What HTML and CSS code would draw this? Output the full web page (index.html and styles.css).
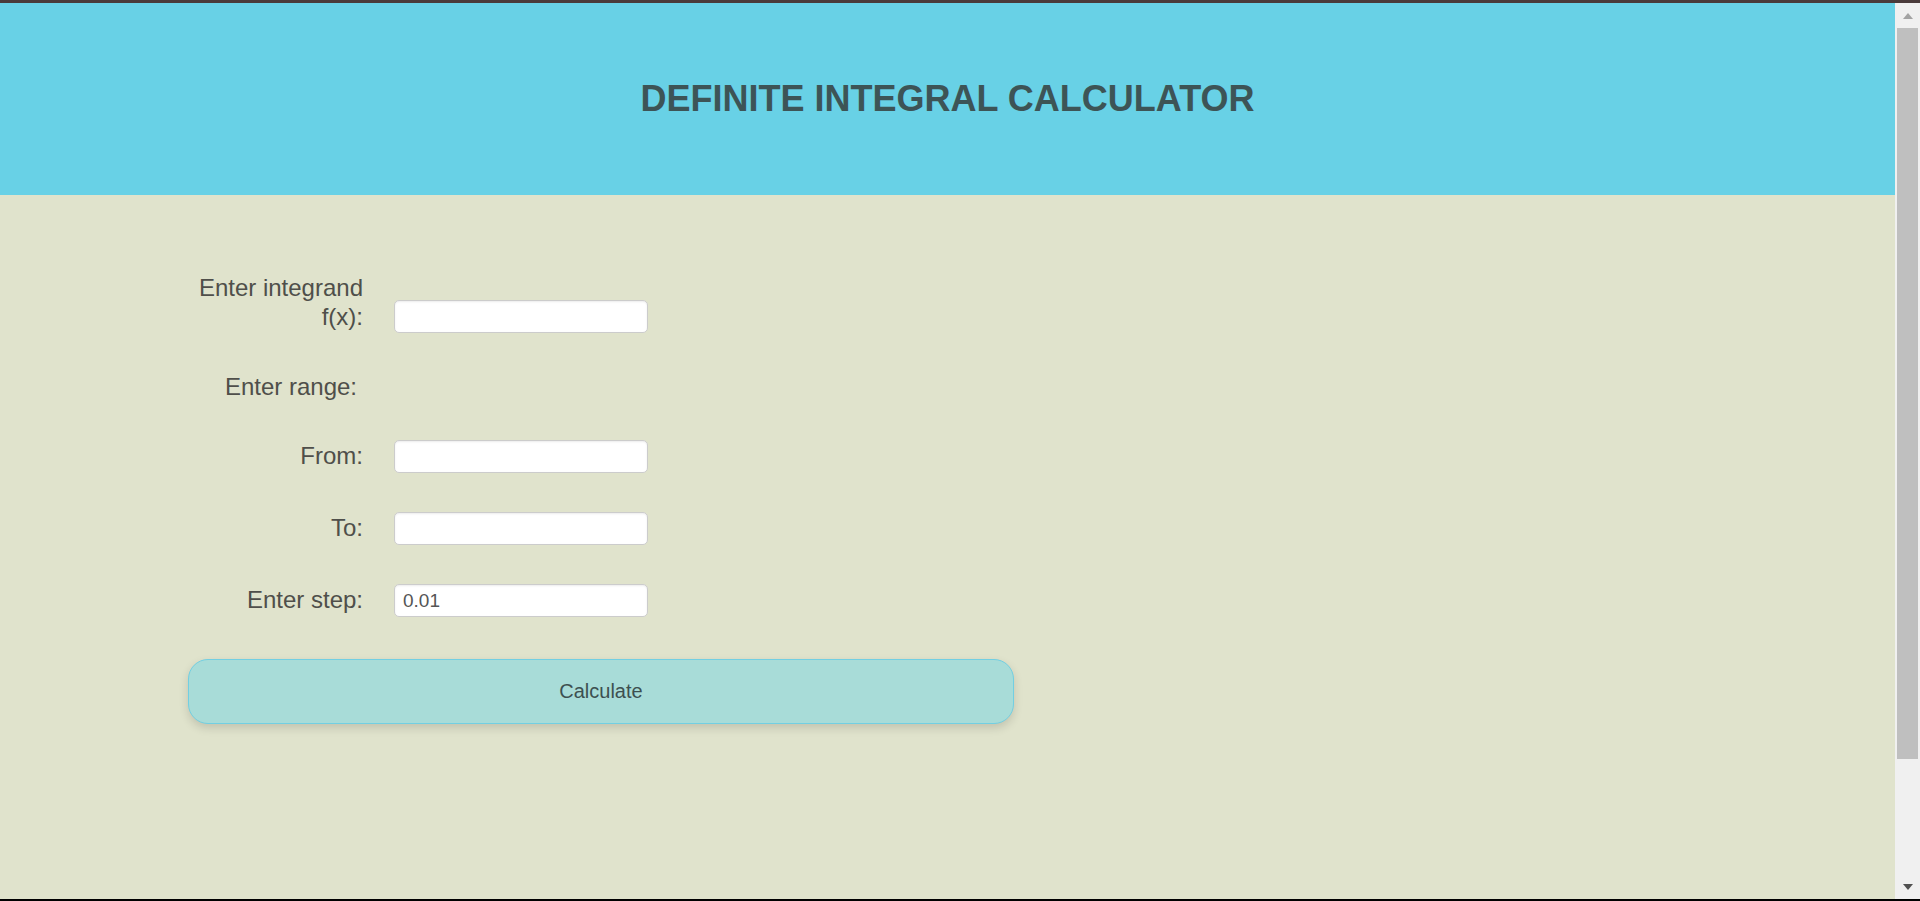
FILE: index.html
```html
<!DOCTYPE html>
<html lang="en">
<head>
<meta charset="utf-8">
<title>Definite Integral Calculator</title>
<link rel="stylesheet" href="styles.css">
</head>
<body>
<div class="frame">
  <div class="page">
    <header class="hero">
      <h1 class="hero-title">DEFINITE INTEGRAL CALCULATOR</h1>
    </header>
    <main class="content">
      <form class="calc">
        <div class="row row-tall">
          <label class="lbl lbl-tall" for="fx">Enter integrand f(x):</label>
          <input class="field" id="fx" type="text">
        </div>
        <div class="row row-text">
          <span class="lbl lbl-range">Enter range:</span>
        </div>
        <div class="row">
          <label class="lbl lbl-input" for="from">From:</label>
          <input class="field" id="from" type="text">
        </div>
        <div class="row">
          <label class="lbl lbl-input" for="to">To:</label>
          <input class="field" id="to" type="text">
        </div>
        <div class="row">
          <label class="lbl lbl-input" for="step">Enter step:</label>
          <input class="field" id="step" type="text" value="0.01">
        </div>
        <button class="calc-btn" type="button">Calculate</button>
      </form>
    </main>
  </div>
  <div class="scrollbar">
    <div class="sb-btn"><span class="arrow-up"></span></div>
    <div class="sb-thumb"></div>
    <div class="sb-spacer"></div>
    <div class="sb-btn"><span class="arrow-down"></span></div>
  </div>
</div>
</body>
</html>
```
FILE: styles.css
```css
html, body {
  margin: 0;
  padding: 0;
  height: 100%;
  overflow: hidden;
}

body {
  font-family: "Liberation Sans", Arial, sans-serif;
}

.frame {
  box-sizing: border-box;
  height: 901px;
  border-top: 3px solid #4a3b3b;
  border-bottom: 2px solid #000;
  display: flex;
}

.page {
  flex: 1;
  background: #e0e3cc;
  display: flex;
  flex-direction: column;
}

.hero {
  height: 192px;
  background: #68d1e6;
  display: flex;
  align-items: center;
  justify-content: center;
}

.hero-title {
  margin: 0;
  font-size: 36px;
  font-weight: bold;
  color: #3d5456;
  line-height: 1;
}

.content {
  padding: 78px 0 0 188px;
}

.calc {
  display: flex;
  flex-direction: column;
  gap: 39px;
  width: 826px;
}

.row {
  display: flex;
  align-items: center;
}

.row-tall {
  align-items: flex-end;
}

.lbl {
  width: 175px;
  margin-right: 31px;
  text-align: right;
  font-size: 24px;
  line-height: 29px;
  color: #4f4f4a;
}

.lbl-tall {
  padding-bottom: 2px;
}

.lbl-input {
  padding-bottom: 3px;
}

.lbl-range {
  width: 169px;
  margin-right: 37px;
}

.field {
  box-sizing: border-box;
  width: 254px;
  height: 33px;
  padding: 0 8px;
  border: 1px solid #cccccc;
  border-radius: 5px;
  background: #fff;
  box-shadow: inset 0 1px 2px rgba(0, 0, 0, 0.08);
  font-family: "Liberation Sans", Arial, sans-serif;
  font-size: 19px;
  color: #555;
  outline: none;
}

.calc-btn {
  box-sizing: border-box;
  margin-top: 3px;
  width: 826px;
  height: 65px;
  border: 1px solid #72cfe2;
  border-radius: 20px;
  background: #a8dcd8;
  box-shadow: 0 4px 10px rgba(0, 0, 0, 0.14);
  font-family: "Liberation Sans", Arial, sans-serif;
  font-size: 20px;
  color: #3d5050;
  cursor: pointer;
}

.scrollbar {
  width: 25px;
  background: #f0f0f0;
  display: flex;
  flex-direction: column;
}

.sb-btn {
  height: 25px;
  display: flex;
  align-items: center;
  justify-content: center;
}

.sb-thumb {
  height: 731px;
  margin: 0 2px;
  background: #bfbfbf;
}

.sb-spacer {
  flex: 1;
}

.arrow-up {
  width: 0;
  height: 0;
  border-left: 5.5px solid transparent;
  border-right: 5.5px solid transparent;
  border-bottom: 6px solid #a3a3a3;
}

.arrow-down {
  width: 0;
  height: 0;
  border-left: 5.5px solid transparent;
  border-right: 5.5px solid transparent;
  border-top: 6px solid #505050;
}
```
